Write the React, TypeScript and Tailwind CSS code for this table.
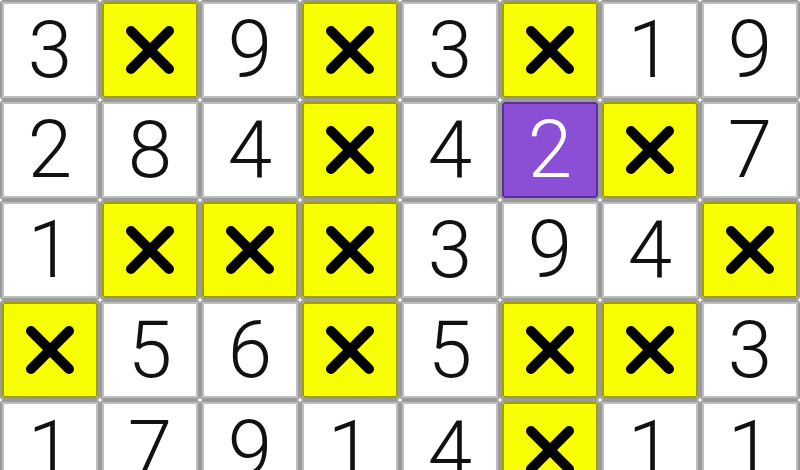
const rows: string[][] = [
  ["3", "x", "9", "x", "3", "x", "1", "9"],
  ["2", "8", "4", "x", "4", "p2", "x", "7"],
  ["1", "x", "x", "x", "3", "9", "4", "x"],
  ["x", "5", "6", "x", "5", "x", "x", "3"],
  ["1", "7", "9", "1", "4", "x", "1", "1"],
];

function Cross() {
  return (
    <svg width="52" height="52" viewBox="0 0 52 52">
      <path d="M7 7 L45 45 M45 7 L7 45" stroke="#000" strokeWidth="10" strokeLinecap="round" fill="none" />
    </svg>
  );
}

function Cell({ value }: { value: string }) {
  const crossed = value === "x";
  const picked = value.startsWith("p");
  let inner = "border-[#bdbdbd] bg-white text-[#111]";
  if (crossed) inner = "border-[#9e9e00] bg-[#f8ff00]";
  if (picked) inner = "border-[#5b2f9a] bg-[#8a4fd4] text-white";

  return (
    <div className="h-[100px] rounded-[4px] border-2 border-[#9a9a9a]">
      <div className={`flex h-full items-center justify-center rounded-[3px] border-2 ${inner}`}>
        {crossed ? <Cross /> : <span className="leading-none">{picked ? value.slice(1) : value}</span>}
      </div>
    </div>
  );
}

export default function App() {
  return (
    <div className="h-[470px] w-[800px] overflow-hidden bg-white">
      <div className="grid grid-cols-8 text-[80px] font-light font-['Roboto',Arial,sans-serif]">
        {rows.flatMap((row, r) => row.map((v, c) => <Cell key={`${r}-${c}`} value={v} />))}
      </div>
    </div>
  );
}
